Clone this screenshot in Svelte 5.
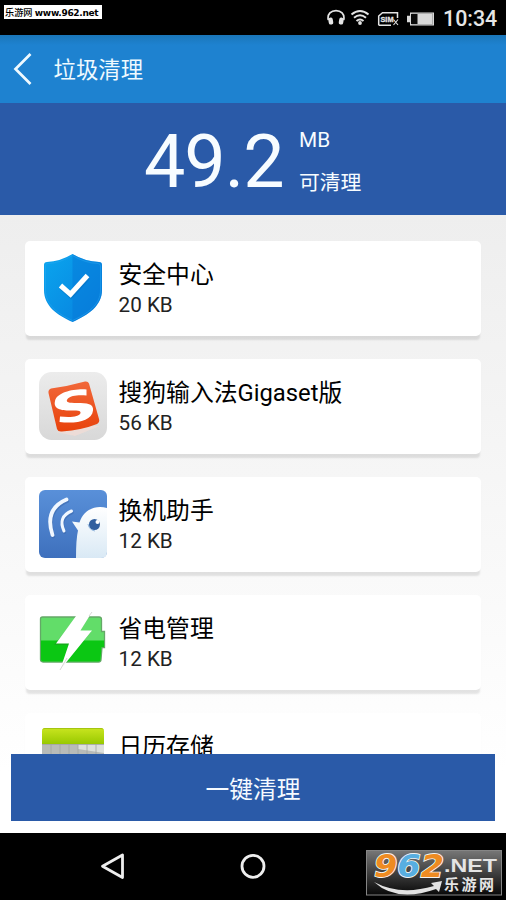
<script lang="ts">
  let apps = $state([
    { icon: 'shield', name: '安全中心', size: '20 KB' },
    { icon: 'sogou', name: '搜狗输入法Gigaset版', size: '56 KB' },
    { icon: 'bird', name: '换机助手', size: '12 KB' },
    { icon: 'power', name: '省电管理', size: '12 KB' },
    { icon: 'calendar', name: '日历存储', size: '' }
  ]);
  let total = $state('49.2');

  function cleanAll() {
    apps = [];
    total = '0.0';
  }
</script>

<div class="screen">
  <div class="status">
    <svg class="status-icons" width="126" height="35" viewBox="0 0 126 35">
      <!-- headphones -->
      <path d="M1.300 20C-1.500 7.500 19.500 7.500 16.700 20" fill="none" stroke="#e4e4e4" stroke-width="1.700" />
      <rect x="1.500" y="17.500" width="4.500" height="7" rx="1.800" fill="#e4e4e4" transform="rotate(-10 4 21)" />
      <rect x="12" y="17.500" width="4.500" height="7" rx="1.800" fill="#e4e4e4" transform="rotate(10 14 21)" />
      <!-- wifi -->
      <g fill="none" stroke="#e4e4e4" stroke-width="2">
        <path d="M24.500 14.500Q33 7.500 41.500 14.500" />
        <path d="M27 17.800Q33 12.800 39 17.800" />
        <path d="M29.500 21Q33 18 36.500 21" />
      </g>
      <circle cx="33" cy="23" r="1.900" fill="#e4e4e4" />
      <!-- sim -->
      <path d="M51.700 25.200V16L55.500 12.700H70.500V18M51.700 25.200H64" fill="none" stroke="#e4e4e4" stroke-width="1.500" />
      <text x="53.500" y="22.300" class="sim" textLength="13" lengthAdjust="spacingAndGlyphs">SIM</text>
      <path d="M66.500 19.500L71 25M71 19.500L66.500 25" stroke="#e4e4e4" stroke-width="1.100" />
      <!-- battery -->
      <path d="M83 12.500H107V25.500H83V22.300H80V15.700H83Z" fill="#d8d8d8" />
      <rect x="84" y="14" width="6.500" height="10" fill="#080808" />
      <path d="M84.500 13.400H105.500V24.600H84.500" fill="none" stroke="#888" stroke-width=".6" />
    </svg>
    <span class="clock">10:34</span>
    <span class="site-tag">乐游网 <b>www.962.net</b></span>
  </div>

  <header>
    <svg width="20" height="34" viewBox="0 0 20 34">
      <path d="M17.500 2L2.500 17L17.500 32" fill="none" stroke="#effaff" stroke-width="2.700" />
    </svg>
    <h1>垃圾清理</h1>
  </header>

  <section class="summary">
    <span class="total">{total}</span>
    <div class="units">
      <span>MB</span>
      <span>可清理</span>
    </div>
  </section>

  <main>
    <div class="list">
      {#each apps as app}
        <div class="card">
          <svg class="icon" width="68" height="68" viewBox="0 0 68 68">
            {#if app.icon === 'shield'}
              <defs>
                <linearGradient id="sh" x1="0" y1="0" x2="1" y2="1">
                  <stop offset="0" stop-color="#0aa5ee" />
                  <stop offset="1" stop-color="#087fdd" />
                </linearGradient>
              </defs>
              <path d="M33.500 0Q46 7.500 60 8Q63 8 63 11V36C63 52 49 61 33.500 68C18 61 5 52 5 36V11Q5 8 8 8Q21 7.500 33.500 0Z" fill="url(#sh)" />
              <path d="M33.500 0Q46 7.500 60 8Q63 8 63 11V36C63 52 49 61 33.500 68Z" fill="#0678d8" opacity=".5" />
              <path d="M33.500 1.500Q46 9 59 9.500Q61.500 9.500 61.500 12V36C61.500 51 48 60 33.500 66.500C19 60 6.500 51 6.500 36V12Q6.500 9.500 9 9.500Q21 9 33.500 1.500Z" fill="none" stroke="#2aa8f2" stroke-width=".8" opacity=".6" />
              <path d="M21.500 32L31.500 40.800L48.500 22" fill="none" stroke="#0563ae" stroke-width="5" opacity=".35" transform="translate(.5 1.200)" />
              <path d="M21.500 31.500L31.500 40.300L48.500 21.500" fill="none" stroke="#fff" stroke-width="5" />
            {:else if app.icon === 'sogou'}
              <defs>
                <linearGradient id="sgbg" x1="0" y1="0" x2="0" y2="1">
                  <stop offset="0" stop-color="#ececec" />
                  <stop offset="1" stop-color="#d8d8d8" />
                </linearGradient>
                <linearGradient id="sg" x1="0" y1="0" x2="0" y2="1">
                  <stop offset="0" stop-color="#f1683a" />
                  <stop offset="1" stop-color="#e8420b" />
                </linearGradient>
              </defs>
              <rect width="68" height="68" rx="12.500" fill="url(#sgbg)" />
              <path d="M17 60L36 64L61 54L50 54Z" fill="#f4ddd5" opacity=".7" />
              <path d="M12 16.500Q30 14 46 9.500Q49 9 50 11.500L60 47Q61 50 58 52Q43 58 23 59.500Q19 60 18 57L9.500 21Q9 17.500 12 16.500Z" fill="url(#sg)" />
              <path d="M47.500 17.500C36 16.500 18 20 16 29C14 37 22 38.500 31 38.500C38 38.500 42 38.500 41.500 41C40.500 45 31 45.500 21 44.500L20.500 50C37 52 53 49 54 38.500C55 31.500 48 31 38 31C30 31 26 30.500 28.500 27C32 23 40 23 47.500 23.500Z" fill="#fff" />
            {:else if app.icon === 'bird'}
              <defs>
                <linearGradient id="bd" x1="0" y1="0" x2="0" y2="1">
                  <stop offset="0" stop-color="#5990d9" />
                  <stop offset="1" stop-color="#3e70bd" />
                </linearGradient>
                <linearGradient id="bdw" x1="0" y1="0" x2="0" y2="1">
                  <stop offset="0" stop-color="#fff" />
                  <stop offset="1" stop-color="#d9e9f5" />
                </linearGradient>
              </defs>
              <rect width="68" height="68" rx="6" fill="url(#bd)" />
              <g fill="none" stroke="#3c69ae" stroke-linecap="round" opacity=".6" transform="translate(.7 1.500)">
                <path d="M27.500 9.500Q5 19 13.500 45" stroke-width="3.800" />
                <path d="M32.500 21Q18.500 27 25 41" stroke-width="3" />
              </g>
              <g fill="none" stroke="#f0f7ff" stroke-linecap="round">
                <path d="M27.500 9.500Q5 19 13.500 45" stroke-width="3.800" />
                <path d="M32.500 21Q18.500 27 25 41" stroke-width="3" />
              </g>
              <path d="M68 18C55 14.500 44 21 40.500 32.500L33 31.500L39 40.500Q37 49 37 68H62Q68 68 68 62Z" fill="url(#bdw)" />
              <circle cx="55.500" cy="34.500" r="5.500" fill="#315f9f" />
              <circle cx="58.500" cy="32" r="2" fill="#fff" />
              <path d="M49 34Q50 40 56 41" fill="none" stroke="#7ea8d6" stroke-width=".8" />
            {:else if app.icon === 'power'}
              <path d="M3.500 9H60Q62.500 9 62.500 11.500V23.500H65.500V39.500H63L62 51.500Q62 54 59.500 54H4Q1.500 54 1.500 51.500V11Q1.500 9 3.500 9Z" fill="#62dd69" stroke="#64a867" stroke-width="1.300" />
              <path d="M2 32.500H65V39H62.500L61.500 51.500Q61.500 53.500 59.500 53.500H4Q2 53.500 2 51.500Z" fill="#0bc713" />
              <path d="M38 8L52 5L41.500 22.500H53L24 57.500L30 35.500H16Z" fill="#287b2c" opacity=".35" transform="translate(-1 1.500)" />
              <path d="M53 4L41.500 22.500H53L21 62L30 35.500H17L37 8L41 4Z" fill="#fff" />
              <path d="M50 8L53 4M21 62L28 50" fill="none" stroke="#bcbcbc" stroke-width=".6" />
            {:else}
              <defs>
                <linearGradient id="cal" x1="0" y1="0" x2="0" y2="1">
                  <stop offset="0" stop-color="#c9e51f" />
                  <stop offset="1" stop-color="#98c900" />
                </linearGradient>
              </defs>
              <path d="M3 18V5Q3 2 6 2H62Q65 2 65 5V18Z" fill="url(#cal)" />
              <path d="M4 3.500Q4 2.500 6 2.500H62Q64 2.500 64 3.500" fill="none" stroke="#a5c510" />
              <rect x="3" y="18" width="62" height="48" fill="#b8bbb8" />
              <path d="M39 18H65V27L39 23Z" fill="#dde0dc" />
              <path d="M3 18.500H65M12 18V66M21 18V66M30 18V66M39 18V66M48 18V66M57 18V66" stroke="#a1a4a1" stroke-width=".8" />
            {/if}
          </svg>
          <div class="info">
            <p class="name">{app.name}</p>
            <p class="size">{app.size}</p>
          </div>
        </div>
      {/each}
    </div>
    <div class="action">
      <button onclick={cleanAll}>一键清理</button>
    </div>
  </main>

  <nav>
    <svg width="506" height="67" viewBox="0 0 506 67">
      <path d="M102.500 33.300L122.500 22V44.500Z" fill="none" stroke="#eee" stroke-width="2.800" stroke-linejoin="round" />
      <circle cx="253" cy="33.300" r="11" fill="none" stroke="#eee" stroke-width="2.800" />
    </svg>
    <svg class="logo" width="136" height="46" viewBox="0 0 136 46">
      <defs>
        <linearGradient id="lg" x1="0" y1="0" x2="0" y2="1">
          <stop offset="0" stop-color="#777" />
          <stop offset="1" stop-color="#080808" />
        </linearGradient>
      </defs>
      <rect x=".5" y=".5" width="135" height="44.500" fill="url(#lg)" stroke="#858585" />
      <text class="digits" x="8" y="27" textLength="70" lengthAdjust="spacingAndGlyphs"><tspan fill="#ee8b22">9</tspan><tspan fill="#58aee0">6</tspan><tspan fill="#ee8b22">2</tspan></text>
      <path d="M8 32Q34 46 68 36L65 33L76 31L73 42L70 39Q31 53 8 32Z" fill="#e2e2e2" />
      <text class="net" x="78" y="22" textLength="53" lengthAdjust="spacingAndGlyphs">.NET</text>
      <text class="cn" x="78" y="40" textLength="50">乐游网</text>
    </svg>
  </nav>
</div>

<style>
  :global(body) {
    margin: 0;
    background: #000;
  }

  .screen {
    width: 506px;
    height: 900px;
    display: flex;
    flex-direction: column;
    overflow: hidden;
    font-family: Roboto, "Noto Sans CJK SC", sans-serif;
  }

  .status {
    position: relative;
    height: 35px;
    background: #000;
    display: flex;
    align-items: center;
    justify-content: flex-end;
    padding-right: 9px;
  }

  .status-icons {
    margin-right: -10px;
  }

  .sim {
    font: bold 7.5px "Liberation Sans", sans-serif;
    fill: #e4e4e4;
    stroke: #e4e4e4;
    stroke-width: 0.3px;
  }

  .clock {
    width: 54px;
    color: #e6e6e6;
    font-size: 21.4px;
    font-weight: 500;
    line-height: 35px;
    padding-top: 2px;
    white-space: nowrap;
  }

  .site-tag {
    position: absolute;
    left: 4px;
    top: 5px;
    width: 98px;
    height: 14px;
    line-height: 15px;
    background: #fff;
    color: #000;
    font-size: 9.2px;
    font-weight: 500;
    padding-left: 1px;
    box-sizing: border-box;
    white-space: nowrap;
  }

  .site-tag b {
    font: bold 9px "DejaVu Sans", sans-serif;
    letter-spacing: -0.3px;
  }

  header {
    height: 68px;
    background: linear-gradient(#1a76b9, #1e82d0 10px);
    display: flex;
    align-items: center;
    padding-left: 13px;
  }

  h1 {
    margin: 2px 0 0 20.5px;
    font-size: 22.4px;
    font-weight: 400;
    line-height: 30px;
    color: #effaff;
  }

  .summary {
    height: 112px;
    background: #2a5aa8;
    color: #f7fcff;
    display: flex;
    padding-left: 144px;
  }

  .total {
    width: 155px;
    font-size: 73.6px;
    line-height: 119px;
    letter-spacing: -1px;
  }

  .units {
    display: flex;
    flex-direction: column;
    gap: 13px;
    padding-top: 22px;
    font-size: 20.8px;
    line-height: 30px;
  }

  main {
    height: 618px;
    display: flex;
    flex-direction: column;
    background: linear-gradient(#eee, #fff 90%);
  }

  .list {
    height: 513px;
    padding: 26px 25px 0;
    overflow: hidden;
    display: flex;
    flex-direction: column;
    gap: 23px;
  }

  .card {
    flex: none;
    height: 95px;
    box-sizing: border-box;
    border-radius: 5px;
    background: #fff;
    box-shadow: 0 5px 2px -1px rgba(0, 0, 0, 0.1);
    display: flex;
    padding: 13.4px 14px 0;
  }

  .icon {
    flex: none;
  }

  .info {
    margin-left: 11.5px;
    padding-top: 2.5px;
  }

  p {
    margin: 0;
    white-space: nowrap;
  }

  .name {
    font-size: 23.8px;
    line-height: 36px;
    color: #000;
  }

  .size {
    font-size: 20.7px;
    line-height: 24px;
    color: #222;
  }

  .action {
    height: 79px;
    padding: 0 11px;
  }

  button {
    display: block;
    width: 484px;
    height: 67px;
    padding: 0;
    border: none;
    background: #2a5aa8;
    color: #f5faff;
    font: 23.7px Roboto, "Noto Sans CJK SC", sans-serif;
    cursor: pointer;
  }

  nav {
    position: relative;
    height: 67px;
    background: #000;
  }

  .logo {
    position: absolute;
    left: 366px;
    top: 17px;
  }

  .digits {
    font: italic bold 32px "DejaVu Sans", sans-serif;
    stroke: #f4f4f4;
    stroke-width: 1.8px;
    paint-order: stroke;
  }

  .net {
    font: bold 17.5px "Liberation Sans", sans-serif;
    fill: #e4e4e4;
  }

  .cn {
    font: bold 15px "Noto Sans CJK SC", sans-serif;
    fill: #e4e4e4;
  }
</style>
